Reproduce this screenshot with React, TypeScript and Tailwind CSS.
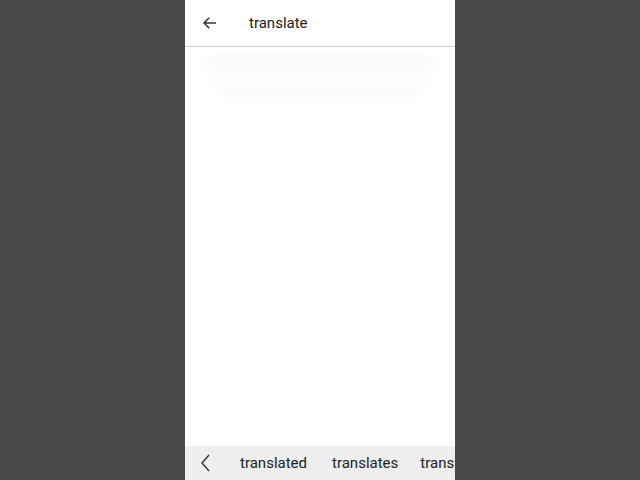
import React from 'react';

export default function App() {
  return (
    <div className="flex h-[480px] w-[640px] bg-[#4a4a4a] font-['Roboto',sans-serif]">
      <div className="ml-[185px] flex h-full w-[270px] flex-col overflow-hidden bg-white">
        {/* Search header */}
        <div className="flex h-[47px] items-center border-b border-[#cfcfcf]">
          <div className="ml-[13px] flex h-6 w-6 items-center justify-center">
            <svg width="18" height="18" viewBox="0 0 24 24" fill="none" stroke="#333" strokeWidth="2">
              <path d="M20 12H4M11 5l-7 7 7 7" />
            </svg>
          </div>
          <span className="ml-[27px] text-[15px] text-[#202020]">translate</span>
        </div>

        {/* Faint ghost results */}
        <div className="flex-1 pt-[6px]">
          <div className="mx-[22px] flex flex-col gap-[4px] opacity-40 blur-[2px]">
            <div className="h-[18px] rounded bg-[#f6f6f6]" />
            <div className="mx-[6px] h-[10px] rounded bg-[#f8f8f8]" />
            <div className="mx-[10px] h-[10px] rounded bg-[#f7f7f7]" />
          </div>
        </div>

        {/* Suggestion bar */}
        <div className="flex h-[34px] items-center whitespace-nowrap bg-[#eeeeee] text-[15px] text-[#222]">
          <svg className="ml-[16px] shrink-0" width="10" height="18" viewBox="0 0 10 18" fill="none" stroke="#333" strokeWidth="1.4">
            <path d="M8 1L1 9l7 8" />
          </svg>
          <div className="ml-[29px] flex">
            <span>translated</span>
            <span className="ml-[25px]">translates</span>
            <span className="ml-[22px]">translating</span>
          </div>
        </div>
      </div>
    </div>
  );
}
